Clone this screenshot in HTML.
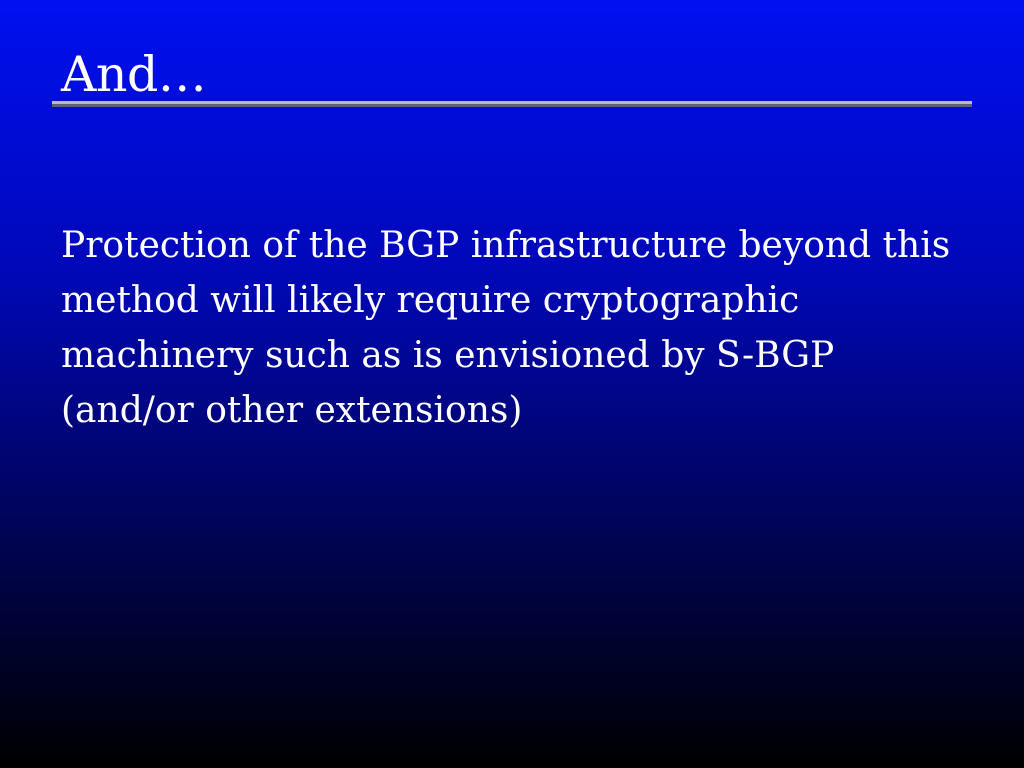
<!DOCTYPE html>
<html><head><style>
html,body{margin:0;padding:0}
body{width:1024px;height:768px;overflow:hidden;position:relative;
background:linear-gradient(to bottom,#0010f0 0%,#0008b8 35%,#000460 65%,#000000 100%);
font-family:"DejaVu Serif","Liberation Serif",serif;color:#fff}
.t{position:absolute;left:61px;top:45px;font-size:49px;line-height:60px;letter-spacing:-0.5px}
.l1{position:absolute;left:52px;top:101px;width:920px;height:3px;background:#b8b8c8}
.l2{position:absolute;left:52px;top:104px;width:920px;height:3px;background:#606070}
.b{position:absolute;left:61px;top:218px;font-size:36px;line-height:55px;width:980px;letter-spacing:0}
</style></head><body>
<div class="t">And…</div>
<div class="l1"></div><div class="l2"></div>
<div class="b">Protection of the BGP infrastructure beyond this<br>method will likely require cryptographic<br>machinery such as is envisioned by S-BGP<br>(and/or other extensions)</div>
</body></html>
